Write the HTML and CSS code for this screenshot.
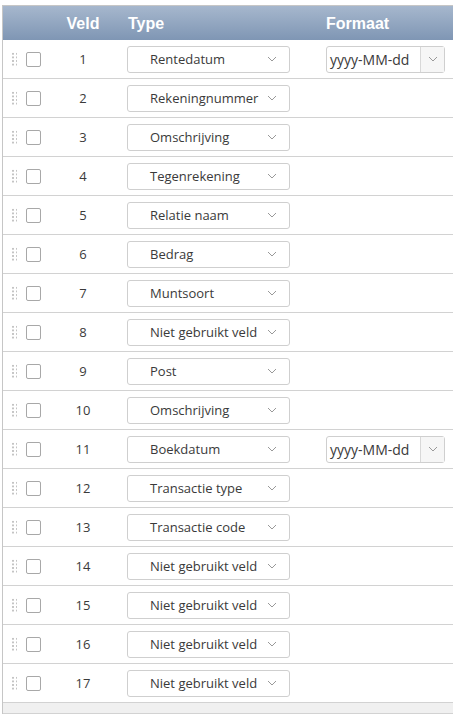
FILE: index.html
```html
<!DOCTYPE html>
<html lang="nl">
<head>
  <meta charset="UTF-8" />
  <title>Velden</title>
  <link rel="stylesheet" href="styles.css">
</head>
<body>
  <div class="grid-wrap">
    <div class="grid-head">
      <div></div>
      <div></div>
      <div class="c-veld">Veld</div>
      <div class="c-type">Type</div>
      <div class="c-format">Formaat</div>
    </div>
    <div class="grid-body" id="rows"></div>
    <div class="grid-foot"></div>
  </div>

  <script>
    var fields = [
      ["Rentedatum", "yyyy-MM-dd"],
      ["Rekeningnummer"],
      ["Omschrijving"],
      ["Tegenrekening"],
      ["Relatie naam"],
      ["Bedrag"],
      ["Muntsoort"],
      ["Niet gebruikt veld"],
      ["Post"],
      ["Omschrijving"],
      ["Boekdatum", "yyyy-MM-dd"],
      ["Transactie type"],
      ["Transactie code"],
      ["Niet gebruikt veld"],
      ["Niet gebruikt veld"],
      ["Niet gebruikt veld"],
      ["Niet gebruikt veld"]
    ];

    var chevron = '<svg width="10" height="6" viewBox="0 0 10 6"><path d="M1 1l4 4 4-4" fill="none" stroke="#999" stroke-width="1"/></svg>';

    var rows = document.getElementById('rows');
    fields.forEach(function (f, i) {
      var row = document.createElement('div');
      row.className = 'grid-row';
      var fmt = '';
      if (f[1]) {
        fmt = '<div class="fmt-box"><span class="fmt-text">' + f[1] + '</span><span class="fmt-btn">' + chevron + '</span></div>';
      }
      row.innerHTML =
        '<div class="c-grip"><span class="grip"></span></div>' +
        '<div class="c-check"><span class="check"></span></div>' +
        '<div class="c-veld">' + (i + 1) + '</div>' +
        '<div class="c-type"><div class="sel-box"><span class="sel-text">' + f[0] + '</span>' + chevron + '</div></div>' +
        '<div class="c-format">' + fmt + '</div>';
      rows.appendChild(row);
    });
  </script>
</body>
</html>
```

FILE: styles.css
```css
body {
  margin: 0;
  background: #fff;
  font-family: 'Open Sans', 'Noto Sans', sans-serif;
  color: #3a3a3a;
}

.grid-wrap {
  margin-top: 5px;
  margin-left: 2px;
  border-left: 1px solid #c6c6c6;
  border-top: 1px solid #c6c6c6;
}

.grid-head,
.grid-row {
  display: grid;
  grid-template-columns: 19px 26px 70px 200px 1fr;
  align-items: center;
}

.grid-head {
  height: 34px;
  background: linear-gradient(#a6b7cd, #7f96b4);
  color: #fff;
  font-family: 'Liberation Sans', Arial, sans-serif;
  font-weight: bold;
  font-size: 16px;
  padding-top: 1px;
  box-sizing: border-box;
}

.grid-head .c-type {
  padding-left: 10px;
}

.grid-head .c-format {
  padding-left: 8px;
}

.grid-row {
  height: 38px;
  border-bottom: 1px solid #d2d2d2;
  font-size: 13px;
}

.c-veld {
  text-align: center;
}

.c-grip {
  display: flex;
  padding-left: 8px;
}

.grip {
  width: 6px;
  height: 14px;
  background-image: radial-gradient(circle, #c4c4c4 1px, transparent 1.3px);
  background-size: 4px 3.6px;
}

.c-check {
  display: flex;
  padding-left: 4px;
}

.check {
  width: 13px;
  height: 13px;
  border: 1px solid #a8a8a8;
  border-radius: 2px;
  background: #fff;
}

.c-type {
  padding-left: 9px;
}

.sel-box {
  width: 163px;
  height: 27px;
  box-sizing: border-box;
  border: 1px solid #cfcfcf;
  border-radius: 3px;
  display: flex;
  align-items: center;
  justify-content: space-between;
  padding: 0 12px 0 22px;
}

.sel-text {
  white-space: nowrap;
}

.c-format {
  padding-left: 8px;
}

.fmt-box {
  width: 119px;
  height: 27px;
  box-sizing: border-box;
  border: 1px solid #cfcfcf;
  border-radius: 3px;
  display: flex;
  align-items: stretch;
}

.fmt-text {
  flex: 1;
  display: flex;
  align-items: center;
  padding-left: 3px;
  white-space: nowrap;
  font-size: 14px;
}

.fmt-btn {
  width: 23px;
  border-left: 1px solid #d8d8d8;
  background: #f6f6f6;
  display: flex;
  align-items: center;
  justify-content: center;
}

.grid-foot {
  height: 10px;
  background: #f0f0f0;
  border-bottom: 1px solid #d2d2d2;
}
```
